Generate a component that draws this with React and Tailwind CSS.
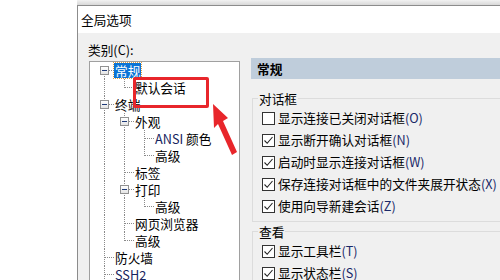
import React from 'react';

const FONT = { fontFamily: '"Noto Sans CJK SC", "Noto Sans", sans-serif' };

// 树节点：level 层级，guides 每一层祖先是否还有后续兄弟
const tree = [
  { label: '常规', level: 0, guides: [], next: true, kids: true, first: true, selected: true },
  { label: '默认会话', level: 1, guides: [true], next: false },
  { label: '终端', level: 0, guides: [], next: true, kids: true },
  { label: '外观', level: 1, guides: [true], next: true, kids: true },
  { label: 'ANSI 颜色', level: 2, guides: [true, true], next: true, latin: 'ANSI', rest: ' 颜色' },
  { label: '高级', level: 2, guides: [true, true], next: false },
  { label: '标签', level: 1, guides: [true], next: true },
  { label: '打印', level: 1, guides: [true], next: true, kids: true },
  { label: '高级', level: 2, guides: [true, true], next: false },
  { label: '网页浏览器', level: 1, guides: [true], next: true },
  { label: '高级', level: 1, guides: [true], next: false },
  { label: '防火墙', level: 0, guides: [], next: true },
  { label: 'SSH2', level: 0, guides: [], next: true, latin: 'SSH2', rest: '' },
];

const Guide = ({ on }) => (
  <div className="relative w-[20px] h-full shrink-0">
    {on && <span className="absolute left-[10px] top-0 bottom-0 border-l border-dotted border-[#8a8a8a]" />}
  </div>
);

const Connector = ({ first, next, kids }) => (
  <div className="relative w-[20px] h-full shrink-0">
    {!first && <span className="absolute left-[10px] top-0 h-[9px] border-l border-dotted border-[#8a8a8a]" />}
    {(next || first) && <span className="absolute left-[10px] top-[8px] bottom-0 border-l border-dotted border-[#8a8a8a]" />}
    <span className="absolute left-[10px] right-0 top-[8px] border-t border-dotted border-[#8a8a8a]" />
    {kids && (
      <span className="absolute left-[6px] top-[4px] w-[9px] h-[9px] border border-[#919191] bg-gradient-to-b from-white to-[#e4e4e4] flex items-center justify-center">
        <span className="w-[5px] h-px bg-[#1e3a78]" />
      </span>
    )}
  </div>
);

const TreeRow = ({ n }) => (
  <div className="flex h-[17px] items-stretch">
    {n.guides.map((g, i) => <Guide key={i} on={g} />)}
    <Connector first={n.first} next={n.next} kids={n.kids} />
    <div className="flex items-center">
      <span
        className={
          n.selected
            ? 'bg-[#0a74d6] text-white px-[1px] leading-[15px] outline outline-1 outline-dotted outline-[#e0a040]'
            : 'text-black px-[1px] leading-[15px]'
        }
      >
        {n.latin ? (
          <>
            <span className="text-[#16245e]">{n.latin}</span>
            {n.rest}
          </>
        ) : (
          n.label
        )}
      </span>
    </div>
  </div>
);

const Check = ({ checked }) => (
  <span className="w-[13px] h-[13px] border border-[#333] bg-white flex items-center justify-center shrink-0">
    {checked && (
      <svg width="11" height="11" viewBox="0 0 11 11">
        <path d="M1.5 5.5 L4.2 8.3 L9.5 2" fill="none" stroke="#222" strokeWidth="1.1" />
      </svg>
    )}
  </span>
);

const Option = ({ text, key2, checked }) => (
  <div className="flex items-center h-[22px] pl-[9px] gap-[3px] whitespace-nowrap">
    <Check checked={checked} />
    <span>
      {text}
      <span className="text-[#1a2868]">({key2})</span>
    </span>
  </div>
);

const Group = ({ title, children, className }) => (
  <fieldset className={'border border-[#dcdcdc] pb-[4px] ' + (className || '')}>
    <legend className="ml-[5px] px-[1px] leading-[17px]">{title}</legend>
    {children}
  </fieldset>
);

export default function App() {
  return (
    <div className="relative w-[500px] h-[280px] overflow-hidden bg-white flex text-[12.7px] text-black" style={FONT}>
      <div className="w-[77px] shrink-0 bg-white" />
      <div className="flex-1 flex flex-col min-w-0">
        <div className="h-[5px] bg-gradient-to-b from-[#f2f2f2] to-[#d8d8d8] shrink-0" />
        <div className="flex-1 flex flex-col border-l border-t border-[#8c8c8c]">
          {/* 标题栏 */}
          <div className="h-[27px] bg-white flex items-center pl-[3px] shrink-0">全局选项</div>
          {/* 主体 */}
          <div className="flex-1 bg-[#f0f0f0] flex pl-[10px]">
            <div className="w-[152px] shrink-0 flex flex-col">
              <div className="h-[16px] mt-[1px] leading-[16px] pl-0 mt-[9px]">类别(C):</div>
              <div className="mt-[3px] ml-[1px] flex-1 bg-white border border-[#a0a0a0] pl-[4px] overflow-hidden">
                {tree.map((n, i) => (
                  <TreeRow key={i} n={n} />
                ))}
              </div>
            </div>
            <div className="flex-1 ml-[11px] flex flex-col min-w-0">
              <div className="mt-[25px] h-[21px] bg-[#bfcddb] flex items-center pl-[6px] font-bold shrink-0">常规</div>
              <Group title="对话框" className="mt-[11px] ml-[1px] -mr-[20px]">
                <Option text="显示连接已关闭对话框" key2="O" checked={false} />
                <Option text="显示断开确认对话框" key2="N" checked />
                <Option text="启动时显示连接对话框" key2="W" checked />
                <Option text="保存连接对话框中的文件夹展开状态" key2="X" checked />
                <Option text="使用向导新建会话" key2="Z" checked />
              </Group>
              <Group title="查看" className="mt-[1px] ml-[1px] -mr-[20px]">
                <Option text="显示工具栏" key2="T" checked />
                <Option text="显示状态栏" key2="S" checked />
              </Group>
            </div>
          </div>
        </div>
      </div>

      {/* 红色标注框 */}
      <div className="absolute left-[133px] top-[77px] w-[76px] h-[31px] border-[3px] border-[#e8262b] rounded-[2px]" />
      {/* 红色箭头 */}
      <svg className="absolute left-0 top-0" width="500" height="280" viewBox="0 0 500 280">
        <polygon points="213,104 228,118 223,121 237,152 232,155 218,124 214,128" fill="#e8262b" />
      </svg>
    </div>
  );
}
